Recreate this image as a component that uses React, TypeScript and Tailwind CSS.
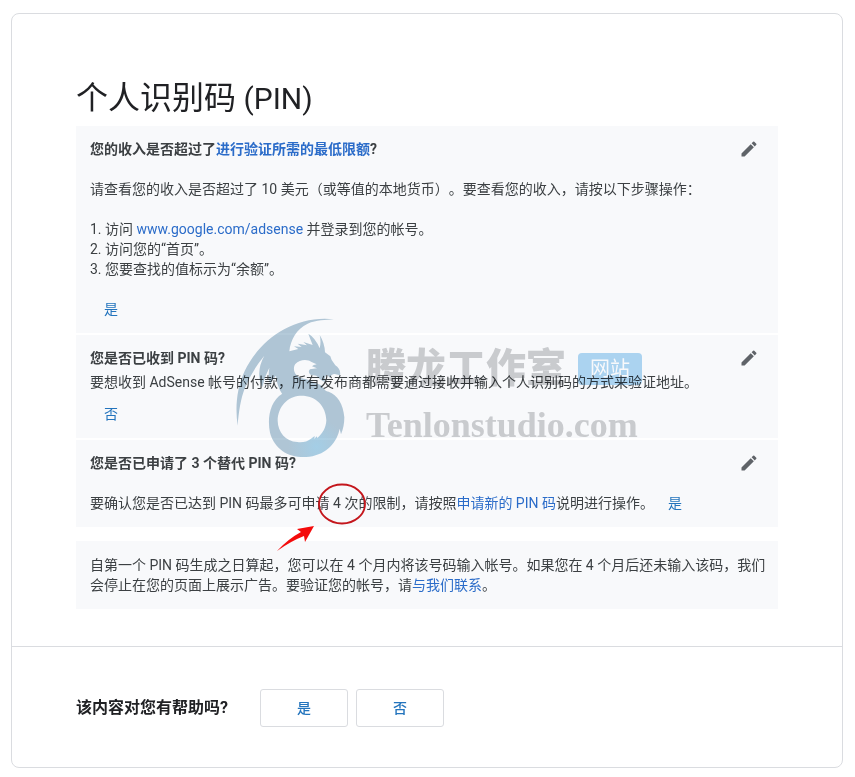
import type { ReactNode } from 'react'
import { MdEdit } from 'react-icons/md'

const LINK = 'text-[#2b6cc9] hover:underline'

export default function App(): JSX.Element {
  return (
    <div className="bg-white pt-[13px] pr-3 pb-2 pl-[11px] font-[Roboto,'Noto_Sans_CJK_SC',sans-serif] text-sm/5 text-[#3c4043] [text-spacing-trim:space-all]">
      <main className="rounded-lg border border-[#dadce0]">
        <article className="px-16 pt-16 pb-[37px]">
          <h1 className="text-[32px]/10 text-[#202124]">
            个人识别码<span className="text-3xl/8"> (PIN)</span>
          </h1>
          <div className="relative mt-2">
            <Steps />
            <Watermark />
            <Annotation />
          </div>
        </article>
        <Feedback />
      </main>
    </div>
  )
}

function Steps(): JSX.Element {
  return (
    <div>
      <div className="flex flex-col gap-[2px]">
        <Question
          title={
            <>
              您的收入是否超过了
              <a href="#threshold" className={LINK}>进行验证所需的最低限额</a>?
            </>
          }
        >
          <p className="mt-5">
            请查看您的收入是否超过了 10 美元（或等值的本地货币）。要查看您的收入，请按以下步骤操作：
          </p>
          <ol className="mt-5 list-inside list-decimal">
            <li>
              访问 <a href="#adsense" className={LINK}>www.google.com/adsense</a> 并登录到您的帐号。
            </li>
            <li>访问您的“首页”。</li>
            <li>您要查找的值标示为“余额”。</li>
          </ol>
          <Answer label="是" className="mt-5 ml-3.5" />
        </Question>
        <Question title="您是否已收到 PIN 码?">
          <p className="mt-1">
            要想收到 AdSense 帐号的付款，所有发布商都需要通过接收并输入个人识别码的方式来验证地址。
          </p>
          <Answer label="否" className="mt-3 ml-3.5" />
        </Question>
        <Question title="您是否已申请了 3 个替代 PIN 码?">
          <p className="mt-5">
            要确认您是否已达到 PIN 码最多可申请 4 次的限制，请按照
            <a href="#new-pin" className={LINK}>申请新的 PIN 码</a>
            说明进行操作。
            <Answer label="是" className="ml-3.5" />
          </p>
        </Question>
      </div>
      <p className="mt-3.5 bg-[#f8f9fb] py-3.5 pr-2 pl-3.5">
        自第一个 PIN 码生成之日算起，您可以在 4 个月内将该号码输入帐号。如果您在 4 个月后还未输入该码，我们会停止在您的页面上展示广告。要验证您的帐号，请
        <a href="#contact" className={LINK}>与我们联系</a>。
      </p>
    </div>
  )
}

function Question({ title, children }: { title: ReactNode; children: ReactNode }): JSX.Element {
  return (
    <section className="flex items-start bg-[#f8f9fb] px-3.5 pt-[13px] pb-3.5">
      <div className="min-w-0 flex-1">
        <h2 className="font-bold">{title}</h2>
        {children}
      </div>
      <button type="button" aria-label="修改" className="mr-[5px] text-[#5f6368]">
        <MdEdit size={20} />
      </button>
    </section>
  )
}

function Answer({ label, className }: { label: string; className: string }): JSX.Element {
  return (
    <button type="button" className={`text-[#2374bd] ${className}`}>
      {label}
    </button>
  )
}

function Feedback(): JSX.Element {
  return (
    <footer className="flex items-center border-t border-[#dadce0] px-16 pt-[42px] pb-10">
      <h2 className="mr-8 text-base font-bold text-[#202124]">该内容对您有帮助吗?</h2>
      <div className="flex gap-2">
        {['是', '否'].map((label) => (
          <button
            key={label}
            type="button"
            className="h-[38px] w-[88px] rounded-[3px] border border-[#dadce0] font-medium text-[#2374bd]"
          >
            {label}
          </button>
        ))}
      </div>
    </footer>
  )
}

function Watermark(): JSX.Element {
  return (
    <div className="pointer-events-none absolute top-[179px] left-36 flex mix-blend-multiply">
      <svg width="220" height="165" viewBox="0 0 660 495" aria-hidden="true">
        <defs>
          <radialGradient id="scales" gradientUnits="userSpaceOnUse" cx="290" cy="425" r="85">
            <stop offset="0" stopColor="#a9d3ea" />
            <stop offset="1" stopColor="#b4cad9" />
          </radialGradient>
        </defs>
        {/* wing, crest and head */}
        <path
          fill="#b4cad9"
          d="M342 43C225 30 122 100 74 198C50 250 45 308 53 362C56 322 62 280 75 248Q98 194 133 152Q113 188 119 222Q124 243 127 246Q133 215 148 188Q143 220 151 239Q157 222 168 212Q170 242 187 268L262 262L326 264C307 252 309 242 296 238C278 232 264 222 246 220C224 213 216 192 226 177C239 161 266 163 273 170L290 178Q280 180 276 184L291 190L270 193Q262 201 272 209L289 212C296 219 305 228 316 231Q310 218 321 209L330 219Q332 208 344 207L360 211C363 198 356 188 346 181L335 165L331 154L315 142Q314 114 299 90Q304 110 299 130Q286 98 265 86Q270 100 278 120L250 111L261 121L233 116L245 126L222 124L235 132L208 139C212 104 229 72 263 56C290 45 316 45 342 43Z"
        />
        {/* coiled tail */}
        <path
          fill="url(#scales)"
          fillRule="evenodd"
          d="M187 266C150 288 141 340 150 383C165 437 213 462 268 455C322 447 351 411 359 371L363 388Q373 365 373 337C370 298 352 269 326 260L260 245ZM239 272C287 270 318 302 319 346C318 369 308 385 292 399L290 394L283 402L284 393L273 401Q256 414 232 411C196 409 174 381 173 347C174 304 203 275 239 272Z"
        />
      </svg>
      <div className="-ml-[74px] pt-[42px] text-[#cfd0d2]">
        <div className="flex items-center gap-3">
          <span className="text-[40px]/[44px] font-black">腾龙工作室</span>
          <span className="rounded bg-[#b0d8f4] px-3 text-[20px]/8 text-white">网站</span>
        </div>
        <div className="mt-3.5 font-['Liberation_Serif',serif] text-4xl/10 font-bold">
          Tenlonstudio.com
        </div>
      </div>
    </div>
  )
}

function Annotation(): JSX.Element {
  return (
    <svg
      className="pointer-events-none absolute top-[354px] left-[200px]"
      width="94"
      height="74"
      viewBox="0 0 94 74"
      aria-hidden="true"
    >
      <ellipse cx="66" cy="24" rx="23" ry="19.5" fill="none" stroke="#c4161c" strokeWidth="1.8" />
      <path d="M1 71Q12 59 25 52L21 49L38 46L29 62L28 56Q15 61 1 71Z" fill="#f40b0b" />
    </svg>
  )
}
